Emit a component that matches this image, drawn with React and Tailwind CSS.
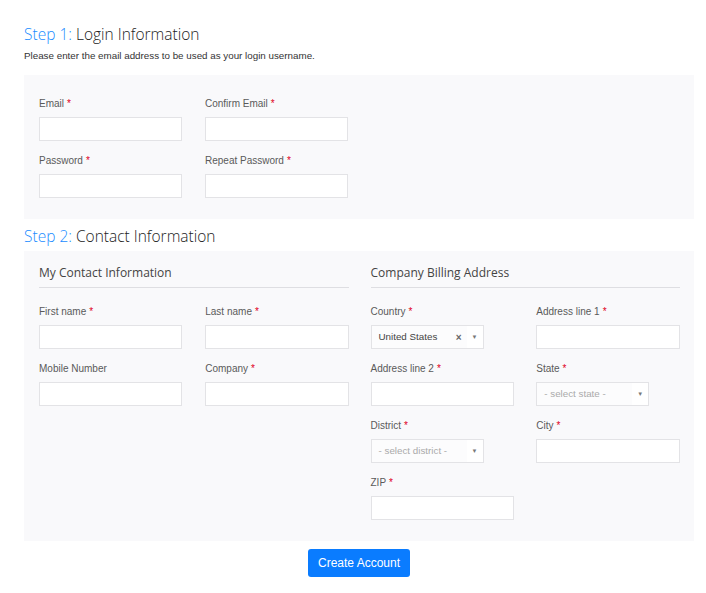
import React from 'react';

const heading = { fontFamily: '"Open Sans", sans-serif' };

const Label = ({ text, required }) => (
  <label className="block h-[14px] text-[10px] leading-[14px] text-[#5a5a5a]">
    {text}
    {required && <span className="ml-[3px] text-[#e0001a]">*</span>}
  </label>
);

const Field = ({ label, required, children }) => (
  <div>
    <Label text={label} required={required} />
    <div className="mt-[6px]">
      {children || <input className="block h-6 w-full border border-[#e3e3e6] bg-white outline-none" />}
    </div>
  </div>
);

const Select = ({ value, placeholder, clearable }) => (
  <div className="flex h-6 w-[113px] border border-[#e3e3e6] bg-white text-[9.8px]">
    <div className="flex flex-1 items-center bg-[#fcfcfd] pl-[7px]">
      {value ? (
        <span className="text-[#444]">{value}</span>
      ) : (
        <span className="text-[#aaa]">{placeholder}</span>
      )}
      {clearable && <span className="ml-auto mr-[5px] text-[10px] font-bold text-[#666]">×</span>}
    </div>
    <div className="flex w-4 items-center justify-center bg-white text-[6px] text-[#777]">▼</div>
  </div>
);

const SectionTitle = ({ children }) => (
  <div style={heading} className="border-b border-[#dedee2] pb-[5px] text-[12px] leading-[18px] text-[#444]">
    {children}
  </div>
);

export default function App() {
  return (
    <div className="min-h-[593px] bg-white pl-6 pr-3 pt-[24px]" style={{ fontFamily: '"Liberation Sans", Arial, sans-serif' }}>
      <h2 style={heading} className="text-[15.5px] font-light leading-[20px] text-[#222]">
        <span className="text-[#1a8cff]">Step 1:</span> Login Information
      </h2>
      <p className="mt-[5px] text-[9.8px] leading-[14px] text-[#333]">
        Please enter the email address to be used as your login username.
      </p>

      <div className="mt-[12px] bg-[#f9f9fb] pb-[21px] pl-[15px] pr-[14px] pt-[22px]">
        <div className="grid w-[309px] grid-cols-2 gap-x-[23px] gap-y-[13px]">
          <Field label="Email" required />
          <Field label="Confirm Email" required />
          <Field label="Password" required />
          <Field label="Repeat Password" required />
        </div>
      </div>

      <h2 style={heading} className="mt-[7px] text-[15.5px] font-light leading-[20px] text-[#222]">
        <span className="text-[#1a8cff]">Step 2:</span> Contact Information
      </h2>

      <div className="mt-[5px] grid grid-cols-2 gap-x-[22px] bg-[#f9f9fb] pb-[21px] pl-[15px] pr-[14px] pt-[13px]">
        <div>
          <SectionTitle>My Contact Information</SectionTitle>
          <div className="mt-[17px] grid grid-cols-2 gap-x-[23px] gap-y-[13px]">
            <Field label="First name" required />
            <Field label="Last name" required />
            <Field label="Mobile Number" />
            <Field label="Company" required />
          </div>
        </div>
        <div>
          <SectionTitle>Company Billing Address</SectionTitle>
          <div className="mt-[17px] grid grid-cols-2 gap-x-[22px] gap-y-[13px]">
            <Field label="Country" required>
              <Select value="United States" clearable />
            </Field>
            <Field label="Address line 1" required />
            <Field label="Address line 2" required />
            <Field label="State" required>
              <Select placeholder="- select state -" />
            </Field>
            <Field label="District" required>
              <Select placeholder="- select district -" />
            </Field>
            <Field label="City" required />
            <Field label="ZIP" required />
          </div>
        </div>
      </div>

      <div className="mt-[8px] flex justify-center">
        <button className="h-[28px] rounded-[3px] bg-[#0a7cff] px-[10px] text-[12px] text-white">
          Create Account
        </button>
      </div>
    </div>
  );
}
